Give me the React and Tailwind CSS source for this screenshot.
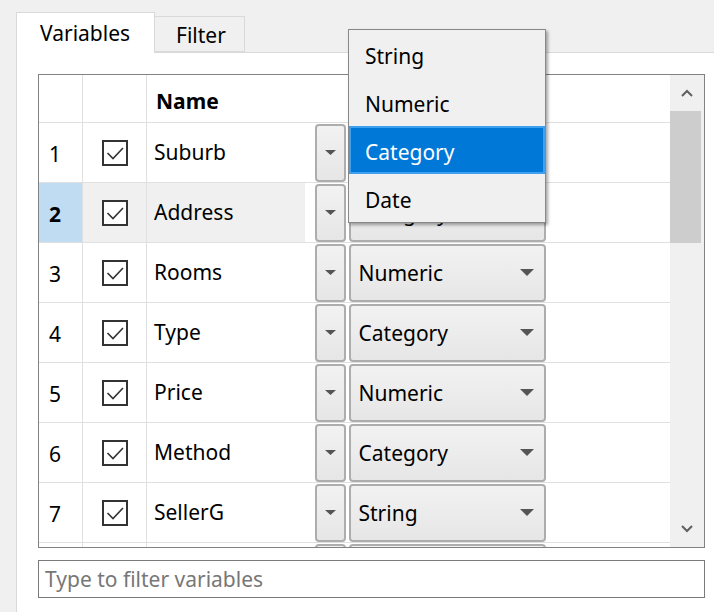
import React from 'react';

const rows = [
  { n: 1, name: 'Suburb', type: '' },
  { n: 2, name: 'Address', type: 'Category', selected: true },
  { n: 3, name: 'Rooms', type: 'Numeric' },
  { n: 4, name: 'Type', type: 'Category' },
  { n: 5, name: 'Price', type: 'Numeric' },
  { n: 6, name: 'Method', type: 'Category' },
  { n: 7, name: 'SellerG', type: 'String' },
  // partly scrolled into view, only the top edge shows
  { n: '', name: '', type: '', blank: true },
];

const menuItems = ['String', 'Numeric', 'Category', 'Date'];

function Arrow({ w = 14, h = 7 }) {
  return (
    <svg width={w} height={h} viewBox={`0 0 ${w} ${h}`}>
      <polygon points={`0,0 ${w},0 ${w / 2},${h}`} fill="#555" />
    </svg>
  );
}

function CheckBox() {
  return (
    <div className="w-[26px] h-[26px] border-2 border-[#333] bg-white flex items-center justify-center">
      <svg width="20" height="16" viewBox="0 0 20 16">
        <polyline points="2.5,8 8,13.5 18,3" fill="none" stroke="#333" strokeWidth="1.6" />
      </svg>
    </div>
  );
}

function Row({ row }) {
  const sel = row.selected;
  return (
    <div className="flex h-[60px] border-b border-[#e0e0e0]">
      <div className={`w-[44px] shrink-0 border-r border-[#e0e0e0] flex items-center pl-[10px] pt-[4px] ${sel ? 'bg-[#bfdcf3] font-bold' : ''}`}>
        {row.n}
      </div>
      <div className={`w-[64px] shrink-0 border-r border-[#e0e0e0] flex items-center justify-center ${sel ? 'bg-[#f0f0f0]' : ''}`}>
        {!row.blank && <CheckBox />}
      </div>
      <div className="w-[166px] shrink-0 flex items-center">
        <div className={`h-full w-[158px] flex items-center pl-[7px] pt-[1px] ${sel ? 'bg-[#f0f0f0]' : ''}`}>{row.name}</div>
      </div>
      <div className="w-[34px] shrink-0 flex items-center justify-center">
        <div className="w-[31px] h-[58px] rounded-[4px] border-2 border-[#adadad] bg-gradient-to-b from-[#f2f2f2] to-[#e6e6e6] flex items-center justify-center">
          <Arrow w={11} h={5} />
        </div>
      </div>
      <div className="w-[200px] shrink-0 flex items-center justify-center">
        <div className="w-[197px] h-[58px] rounded-[4px] border-2 border-[#adadad] bg-gradient-to-b from-[#f2f2f2] to-[#e6e6e6] flex items-center justify-between pl-[8px] pr-[10px]">
          <span className="pt-[3px]">{row.type}</span>
          <Arrow />
        </div>
      </div>
    </div>
  );
}

export default function App() {
  return (
    <div className="w-[714px] h-[612px] bg-[#f0f0f0] relative overflow-hidden text-[21px] text-black" style={{ fontFamily: '"Noto Sans", sans-serif' }}>
      {/* tabs */}
      <div className="flex items-end pl-4 pt-[11px] h-[52px]">
        <div className="w-[139px] h-[41px] bg-white border border-b-0 border-[#d9d9d9] relative z-10 flex items-start pl-[23px] pt-[5px] translate-y-px">
          Variables
        </div>
        <div className="w-[90px] h-[36px] bg-[#f0f0f0] border border-l-0 border-[#d9d9d9] flex items-start pl-[21px] pt-[3px]">
          Filter
        </div>
      </div>

      {/* panel */}
      <div className="ml-4 h-[560px] bg-white border-l border-t border-[#d9d9d9] pl-[21px] pr-[9px] pt-[21px]">
        <div className="h-[474px] border border-[#828282] flex">
          <div className="flex-1 overflow-hidden">
            <div className="flex h-[48px] border-b border-[#e0e0e0]">
              <div className="w-[44px] shrink-0 border-r border-[#e0e0e0]" />
              <div className="w-[64px] shrink-0 border-r border-[#e0e0e0]" />
              <div className="pl-[9px] pt-[11px] font-bold">Name</div>
            </div>
            {rows.map((r, i) => (
              <Row key={i} row={r} />
            ))}
          </div>
          {/* scrollbar */}
          <div className="w-[34px] bg-[#f0f0f0] flex flex-col">
            <div className="h-[36px] flex items-center justify-center">
              <svg width="12" height="8" viewBox="0 0 12 8">
                <polyline points="1,7 6,2 11,7" fill="none" stroke="#606060" strokeWidth="2" />
              </svg>
            </div>
            <div className="h-[132px] w-[31px] bg-[#cdcdcd]" />
            <div className="flex-1" />
            <div className="h-[36px] flex items-center justify-center">
              <svg width="12" height="8" viewBox="0 0 12 8">
                <polyline points="1,1 6,6 11,1" fill="none" stroke="#606060" strokeWidth="2" />
              </svg>
            </div>
          </div>
        </div>

        <div className="mt-[12px] h-[38px] border border-[#7a7a7a] flex items-center pl-[6px] pt-[1px] text-[#777]">
          Type to filter variables
        </div>
      </div>

      {/* dropdown popup */}
      <div className="absolute left-[348px] top-[29px] w-[198px] bg-[#f0f0f0] border border-[#888] shadow-[2px_2px_3px_rgba(0,0,0,0.35)] z-20">
        {menuItems.map((m) => (
          <div
            key={m}
            className={`h-[48px] flex items-center pt-[5px] ${m === 'Category' ? 'bg-[#0078d7] text-white border-2 border-[#3ea0ef] pl-[14px]' : 'pl-[16px]'}`}
          >
            {m}
          </div>
        ))}
      </div>
    </div>
  );
}
